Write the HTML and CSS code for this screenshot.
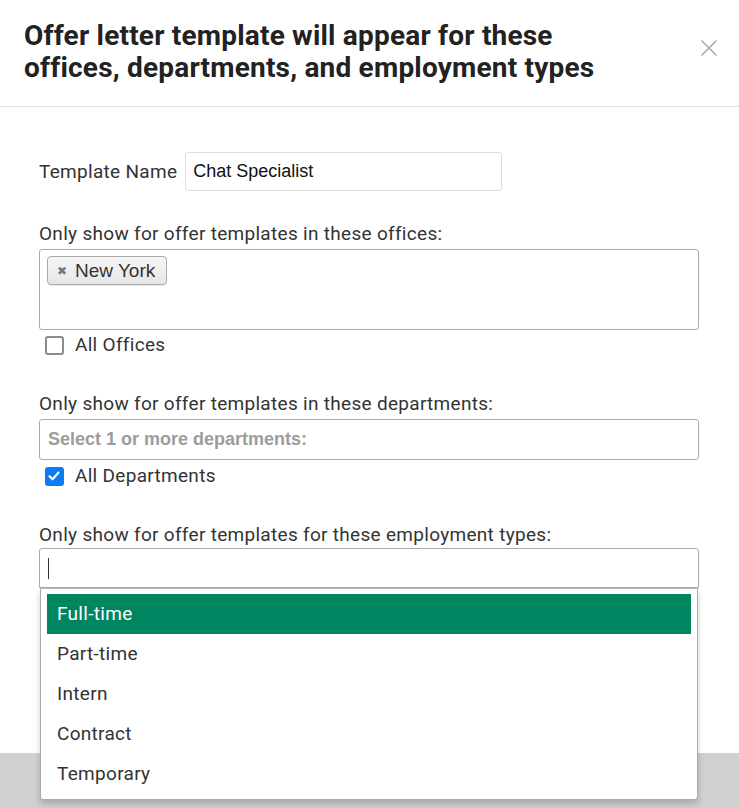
FILE: index.html
```html
<!DOCTYPE html>
<html>
    <head>
        <link rel="stylesheet" href="styles.css">
    </head>
    <body>
        <div class="modal">
            <div class="modal-header">
                <h2 class="modal-title">Offer letter template will appear for these offices, departments, and employment types</h2>
                <span class="close">
                    <svg width="18" height="18" viewBox="0 0 18 18"><path d="M1.5 1.5 L16.5 16.5 M16.5 1.5 L1.5 16.5" stroke="#a0a0a0" stroke-width="1.4" fill="none"/></svg>
                </span>
            </div>

            <div class="modal-body">
                <div class="name-row">
                    <label for="tname">Template Name</label>
                    <input type="text" id="tname" class="name-input" value="Chat Specialist">
                </div>

                <div class="field">
                    <div class="field-label">Only show for offer templates in these offices:</div>
                    <div class="chosen-box tall">
                        <span class="tag"><span class="tag-x">&#10006;</span>New York</span>
                    </div>
                    <div class="check-row">
                        <span class="checkbox"></span>
                        <span>All Offices</span>
                    </div>
                </div>

                <div class="field">
                    <div class="field-label">Only show for offer templates in these departments:</div>
                    <div class="chosen-box">
                        <span class="placeholder">Select 1 or more departments:</span>
                    </div>
                    <div class="check-row">
                        <span class="checkbox checked">
                            <svg width="18" height="18" viewBox="0 0 18 18"><path d="M4.5 9.2 L7.6 12.3 L13.5 5.6" stroke="#fff" stroke-width="2.2" fill="none" stroke-linecap="round" stroke-linejoin="round"/></svg>
                        </span>
                        <span>All Departments</span>
                    </div>
                </div>

                <div class="field">
                    <div class="field-label tight">Only show for offer templates for these employment types:</div>
                    <div class="select-wrap">
                        <div class="chosen-box open">
                            <span class="caret"></span>
                        </div>
                        <ul class="dropdown">
                            <li class="active">Full-time</li>
                            <li>Part-time</li>
                            <li>Intern</li>
                            <li>Contract</li>
                            <li>Temporary</li>
                        </ul>
                    </div>
                </div>
            </div>

            <div class="modal-footer"></div>
        </div>
    </body>
</html>
```

FILE: styles.css
```css
body {
    margin: 0;
    font-family: Roboto, "Liberation Sans", sans-serif;
    color: #333;
    background: #fff;
}

.modal {
    width: 739px;
    height: 808px;
    display: flex;
    flex-direction: column;
    overflow: hidden;
}

.modal-header {
    display: flex;
    justify-content: space-between;
    align-items: flex-start;
    padding: 20px 21px 22px 24px;
    border-bottom: 1px solid #e2e2e2;
}

.modal-title {
    margin: 0;
    width: 620px;
    font-size: 28px;
    line-height: 32px;
    font-weight: 700;
    color: #222;
    letter-spacing: 0.2px;
}

.close {
    flex-shrink: 0;
    margin-top: 19px;
    width: 18px;
    height: 18px;
}

.modal-body {
    flex: 1;
    padding: 45px 40px 0 39px;
    position: relative;
}

.name-row {
    display: flex;
    align-items: center;
    gap: 8px;
    font-size: 19px;
    letter-spacing: 0.3px;
}

.name-input {
    width: 317px;
    height: 39px;
    box-sizing: border-box;
    border: 1px solid #dedede;
    border-radius: 3px;
    padding: 0 7px;
    font-family: "Liberation Sans", Arial, sans-serif;
    font-size: 18px;
    letter-spacing: 0;
    color: #111;
}

.field {
    margin-top: 31px;
}

.field + .field {
    margin-top: 35px;
}

.field-label {
    font-size: 19px;
    line-height: 24px;
    letter-spacing: 0.3px;
    margin-bottom: 3px;
}

.field-label.tight {
    margin-bottom: 1px;
}

.chosen-box {
    height: 41px;
    box-sizing: border-box;
    border: 1px solid #aaa;
    border-radius: 3px;
    padding: 0 8px;
    display: flex;
    align-items: center;
    background: #fff;
}

.chosen-box.tall {
    height: 81px;
    align-items: flex-start;
    padding: 6px 7px;
}

.chosen-box.open {
    height: 40px;
    border-radius: 3px 3px 0 0;
}

.tag {
    display: inline-flex;
    align-items: center;
    height: 29px;
    width: 120px;
    box-sizing: border-box;
    padding: 0 8px 0 9px;
    border: 1px solid #aaa;
    border-radius: 4px;
    background: linear-gradient(#f6f6f6, #e6e6e6);
    box-shadow: 0 1px 1px rgba(0,0,0,0.08);
    font-family: "Liberation Sans", Arial, sans-serif;
    font-size: 19px;
    color: #333;
}

.tag-x {
    font-size: 12px;
    color: #777;
    margin-right: 8px;
}

.placeholder {
    font-family: "Liberation Sans", Arial, sans-serif;
    font-size: 18px;
    font-weight: 700;
    color: #9c9c9c;
}

.caret {
    width: 1px;
    height: 21px;
    background: #333;
}

.check-row {
    display: flex;
    align-items: center;
    gap: 11px;
    margin-top: 3px;
    padding-left: 6px;
    font-size: 19px;
    line-height: 24px;
    letter-spacing: 0.3px;
}

.field + .field .check-row {
    margin-top: 4px;
}

.checkbox {
    flex-shrink: 0;
    width: 19px;
    height: 19px;
    box-sizing: border-box;
    border: 2px solid #8b8b92;
    border-radius: 3px;
    background: #fff;
    display: inline-flex;
}

.checkbox.checked {
    border: none;
    background: #0b7cf6;
    border-radius: 3px;
}

.select-wrap {
    position: relative;
}

.dropdown {
    position: absolute;
    top: 40px;
    left: 1px;
    right: 1px;
    margin: 0;
    padding: 5px 6px 5px 6px;
    list-style: none;
    background: #fff;
    border: 1px solid #aaa;
    border-top-color: #bbb;
    border-radius: 0 0 3px 3px;
    box-shadow: 0 4px 6px rgba(0,0,0,0.18);
    z-index: 2;
}

.dropdown li {
    height: 40px;
    line-height: 40px;
    padding-left: 10px;
    font-size: 19px;
    letter-spacing: 0.3px;
    color: #333;
}

.dropdown li.active {
    background: #008561;
    color: #fff;
}

.modal-footer {
    height: 55px;
    background: #d0d0d0;
}
```
